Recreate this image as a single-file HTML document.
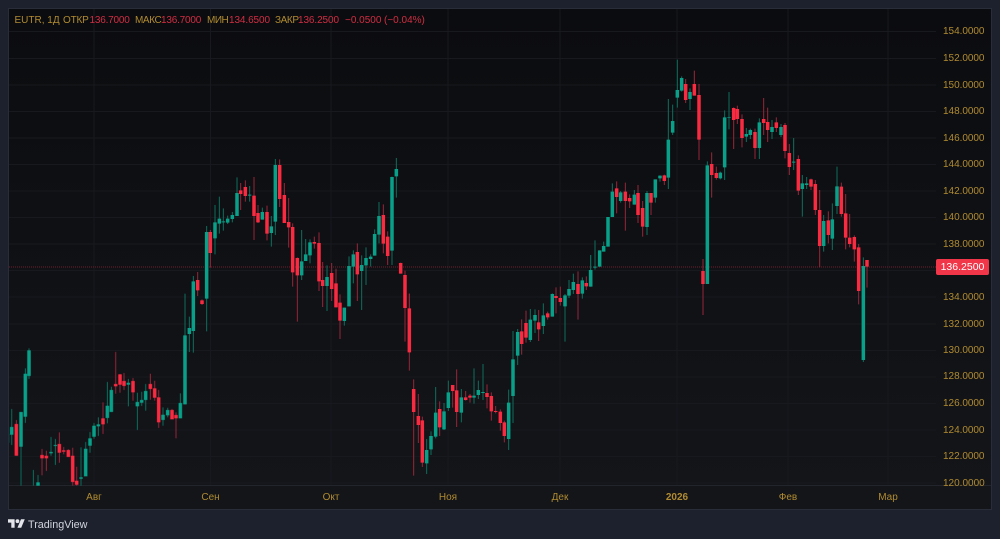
<!DOCTYPE html>
<html><head><meta charset="utf-8"><style>
html,body{margin:0;padding:0;width:1000px;height:539px;overflow:hidden;background:#1d212d;font-family:"Liberation Sans",sans-serif}
#panel{position:absolute;left:8px;top:8px;width:982px;height:500px;border:1px solid #292d39;background:linear-gradient(#0b0c0f,#131519 95%);overflow:hidden}
#chart{position:absolute;left:0;top:0}
.t{position:absolute;white-space:nowrap;font-size:10px;line-height:12px;color:#b18b30;filter:blur(.2px)}
.r{color:#d22d43}
.p{left:943px;letter-spacing:-.03px}
.m{top:492px;transform:translateX(-50%)}
#lab{position:absolute;left:936px;top:259px;width:53px;height:16px;background:#f23649;border-radius:2px;color:#fff;font-size:10.5px;line-height:16px;text-align:center}
.wg{fill:none;stroke:#0e6e5e;stroke-width:3}.wr{fill:none;stroke:#98263a;stroke-width:3}
.bg{fill:none;stroke:#08a088;stroke-width:10.500}.br{fill:none;stroke:#fa2a41;stroke-width:10.500}
#cd{filter:blur(.25px)}
</style></head><body>
<div id="panel"></div>
<svg id="chart" width="1000" height="539" viewBox="0 0 1000 539">
<defs><clipPath id="c"><rect x="9" y="9" width="927" height="477"/></clipPath></defs>
<g stroke="#17191e" stroke-width="1" fill="none">
<path d="M9 31.5H936M9 58.5H936M9 85H936M9 111.5H936M9 138H936M9 164.5H936M9 191H936M9 217.5H936M9 244H936M9 270.5H936M9 297H936M9 324H936M9 350.5H936M9 377H936M9 403.5H936M9 430H936M9 456.5H936M9 483H936"/>
<path d="M94 9V486M210.5 9V486M331 9V486M448 9V486M560 9V486M677 9V486M788 9V486M888 9V486"/>
</g>
<path d="M9 485.5H991" stroke="#22252b" fill="none"/>
<path d="M9 267H936" stroke="#6e202e" stroke-dasharray="1 1" fill="none"/>
<g clip-path="url(#c)"><g id="cd">
<g transform="translate(0,340) scale(.33333)">
<path class="wg" d="M35 207V315M63 216V437M76 85V249M87 25V117M100 390V437M114 405V437M153 291V347M166 297V375M243 322V437M257 306V409M270 276V338M282 249V296M295 232V288M322 126V250M334 140V216M385 117V199M412 158V270M425 155V198M437 132V212M489 202V257M503 203V232M541 160V235"/>
<path class="wr" d="M49 240V347M126 327V406M139 332V393M178 277V368M191 321V343M205 328V351M218 323V437M230 380V437M309 187V282M347 36V161M360 102V158M372 99V150M399 114V182M451 101V179M464 122V182M476 150V264M516 207V238M528 217V295"/>
<path class="bg" d="M22 282V308M35 261V284M63 216V320M76 101V230M87 31V108M114 427V437M153 336V340M166 315V318M243 412V416M257 326V409M270 295V317M282 257V290M295 253V259M322 197V234M334 150V216M385 128V134M412 186V199M425 180V188M437 153V180M489 224V240M503 210V226M541 189V235"/>
<path class="br" d="M49 252V347M126 345V355M139 347V355M178 312V338M191 331V335M205 330V351M218 347V426M230 422V434M309 235V253M347 132V139M360 103V134M372 123V138M399 123V157M451 132V147M464 145V173M476 172V247M516 210V238M528 225V235"/>
</g>
<g transform="translate(180,150) scale(.33333)">
<path class="wg" d="M15 431V763M28 500V606M40 378V608M80 228V544M105 165V313M118 140V251M130 175V242M143 197V222M157 186V217M171 82V198M209 108V155M247 173V209M274 198V290M286 27V255M365 240V390M377 267V333M390 268V340M441 346V483M493 473V527M507 319V469M520 301V400M545 316V480M558 292V405M572 313V350M584 238V317M597 156V280M636 80V345M649 24V143"/>
<path class="wr" d="M53 366V438M66 448V465M91 240V353M182 99V180M196 91V155M222 81V270M234 165V219M261 167V271M299 28V171M313 99V219M326 144V293M338 220V410M352 322V515M403 260V296M417 247V423M428 336V471M455 339V453M468 356V472M480 433V567M532 280V453M610 163V310M623 244V345M662 338V371M675 362V575M688 431V600"/>
<path class="bg" d="M15 556V763M28 534V552M40 394V543M80 246V446M105 217V265M118 206V221M130 214V217M143 206V218M157 195V207M171 129V198M209 134V137M247 186V209M274 229V249M286 45V215M365 334V376M377 313V333M390 277V316M441 381V408M493 473V513M507 348V469M520 313V350M545 345V363M558 324V346M572 320V327M584 252V317M597 198V254M636 81V302M649 57V79"/>
<path class="br" d="M53 390V421M66 451V462M91 246V309M182 121V132M196 111V138M222 137V198M234 189V217M261 186V251M299 45V147M313 135V219M326 216V232M338 231V367M352 324V376M403 276V281M417 279V394M428 390V408M455 369V417M468 400V472M480 458V512M532 306V373M610 195V281M623 260V318M662 339V371M675 375V474"/>
</g>
<g transform="translate(400,250) scale(.33333)">
<path class="wg" d="M80 567V672M93 544V615M107 411V565M132 459V540M145 392V483M184 417V517M222 355V461M235 392V447M249 342V450M326 419V600M339 243V519M353 237V345M391 177V276M405 178V249M430 160V252M457 130V200M495 132V275M507 90V144M520 71V132M547 82V146M572 15V110"/>
<path class="wr" d="M28 131V362M41 388V677M55 432V579M67 500V651M119 454V558M158 405V473M170 358V531M197 423V452M210 432V458M261 403V475M274 427V512M287 468V490M301 478V542M313 512V577M365 208V314M378 182V278M416 180V273M443 185V209M468 112V190M481 110V167M534 64V209M559 79V120"/>
<path class="bg" d="M80 600V640M93 558V598M107 488V560M132 484V538M145 427V474M184 442V488M222 437V443M235 420V435M249 426V429M326 458V567M339 328V438M353 246V317M391 209V270M405 195V212M430 196V228M457 132V200M495 136V169M507 117V137M520 96V120M547 91V131M572 60V109"/>
<path class="br" d="M28 175V307M41 417V486M55 498V525M67 511V638M119 477V532M158 405V423M170 421V486M197 442V450M210 437V443M261 429V441M274 438V484M287 483V486M301 485V519M313 517V558M365 244V282M378 219V263M416 217V238M443 190V202M468 138V144M481 144V156M534 102V132M559 99V109"/>
</g>
<g transform="translate(590,50) scale(.33333)">
<path class="wg" d="M2 615V710M15 571V659M29 601V650M41 575V605M54 501V590M67 400V501M92 423V458M133 420V464M171 423V555M196 388V458M210 376V395M235 147V417M248 164V255M262 29V173M275 79V125M300 115V180M352 334V702M391 365V388M404 181V390M417 126V238M469 234V276M481 236V267M508 205V327M546 210V267M573 222V261"/>
<path class="wr" d="M80 394V490M106 398V542M119 433V474M144 405V519M158 453V560M183 429V495M223 374V405M287 87V159M313 62V137M327 102V330M339 627V795M365 307V443M379 350V389M431 172V297M442 167V222M456 193V292M495 236V327M521 144V255M533 173V276M559 202V246M585 219V325M598 282V375"/>
<path class="bg" d="M2 660V710M15 650V653M29 601V650M41 588V605M54 501V590M67 425V501M92 427V453M133 434V464M171 429V531M196 388V443M210 377V385M235 269V383M248 213V248M262 120V143M275 84V122M300 126V147M352 346V702M391 368V385M404 202V352M417 202V204M469 252V260M481 240V255M508 217V294M546 231V246M573 231V255"/>
<path class="br" d="M80 415V441M106 425V453M119 444V454M144 429V495M158 474V530M183 429V458M223 376V393M287 102V150M313 102V137M327 135V269M339 663V702M365 342V375M379 369V384M431 174V210M442 177V207M456 207V264M495 246V294M521 207V219M533 216V240M559 217V234M585 225V303M598 309V351"/>
</g>
<g transform="translate(770,90) scale(.33333)">
<path class="wg" d="M71 144V240M97 255V380M110 261V297M161 375V485M187 340V480M201 230V372M280 502V816"/>
<path class="wr" d="M85 196V315M123 266V300M136 270V375M149 300V532M175 364V460M214 278V380M227 312V478M239 372V472M253 436V515M266 462V643M291 510V593"/>
<path class="bg" d="M71 215V218M97 280V297M110 280V285M161 393V468M187 388V446M201 289V348M280 528V810"/>
<path class="br" d="M85 207V302M123 268V290M136 282V360M149 360V468M175 391V435M214 290V372M227 370V443M239 443V462M253 441V478M266 472V603M291 510V530"/>
</g>
</g></g>
<g transform="translate(8,519.3) scale(.472)"><path fill="#e3e5ea" d="M14 18H7V7H0V0h14v18zM28 18h-8L27.500 0h8L28 18z"/><circle cx="20" cy="4" r="4" fill="#e3e5ea"/></g>
</svg>
<div class="t" style="left:14.500px;top:14.500px">EUTR, 1Д</div>
<div class="t" style="left:63px;top:14.500px;letter-spacing:-.2px">ОТКР</div>
<div class="t r" style="left:89.500px;top:14.500px;letter-spacing:-.2px">136.7000</div>
<div class="t" style="left:135px;top:14.500px;letter-spacing:-.4px">МАКС</div>
<div class="t r" style="left:161px;top:14.500px;letter-spacing:-.2px">136.7000</div>
<div class="t" style="left:207px;top:14.500px;letter-spacing:-.5px">МИН</div>
<div class="t r" style="left:229px;top:14.500px;letter-spacing:-.1px">134.6500</div>
<div class="t" style="left:275px;top:14.500px;letter-spacing:-.4px">ЗАКР</div>
<div class="t r" style="left:298px;top:14.500px;letter-spacing:-.1px">136.2500</div>
<div class="t r" style="left:345px;top:14.500px">−0.0500</div>
<div class="t r" style="left:384px;top:14.500px">(−0.04%)</div>
<div class="t p" style="top:25.500px">154.0000</div>
<div class="t p" style="top:52.500px">152.0000</div>
<div class="t p" style="top:79.500px">150.0000</div>
<div class="t p" style="top:105.500px">148.0000</div>
<div class="t p" style="top:132.500px">146.0000</div>
<div class="t p" style="top:158.500px">144.0000</div>
<div class="t p" style="top:185.500px">142.0000</div>
<div class="t p" style="top:211.500px">140.0000</div>
<div class="t p" style="top:238.500px">138.0000</div>
<div class="t p" style="top:291.500px">134.0000</div>
<div class="t p" style="top:318.500px">132.0000</div>
<div class="t p" style="top:344.500px">130.0000</div>
<div class="t p" style="top:370.500px">128.0000</div>
<div class="t p" style="top:397.500px">126.0000</div>
<div class="t p" style="top:424.500px">124.0000</div>
<div class="t p" style="top:450.500px">122.0000</div>
<div style="position:absolute;left:940px;top:470px;width:50px;height:15.500px;overflow:hidden"><div class="t" style="left:3px;top:7.500px">120.0000</div></div>
<div id="lab">136.2500</div>
<div class="t m" style="left:94px">Авг</div>
<div class="t m" style="left:210.500px">Сен</div>
<div class="t m" style="left:331px">Окт</div>
<div class="t m" style="left:448px">Ноя</div>
<div class="t m" style="left:560px">Дек</div>
<div class="t m" style="left:677px;font-weight:bold">2026</div>
<div class="t m" style="left:788px">Фев</div>
<div class="t m" style="left:888px">Мар</div>
<div style="position:absolute;left:28px;top:517.500px;font-size:10.800px;line-height:14px;color:#d1d4dc;white-space:nowrap">TradingView</div>
</body></html>
